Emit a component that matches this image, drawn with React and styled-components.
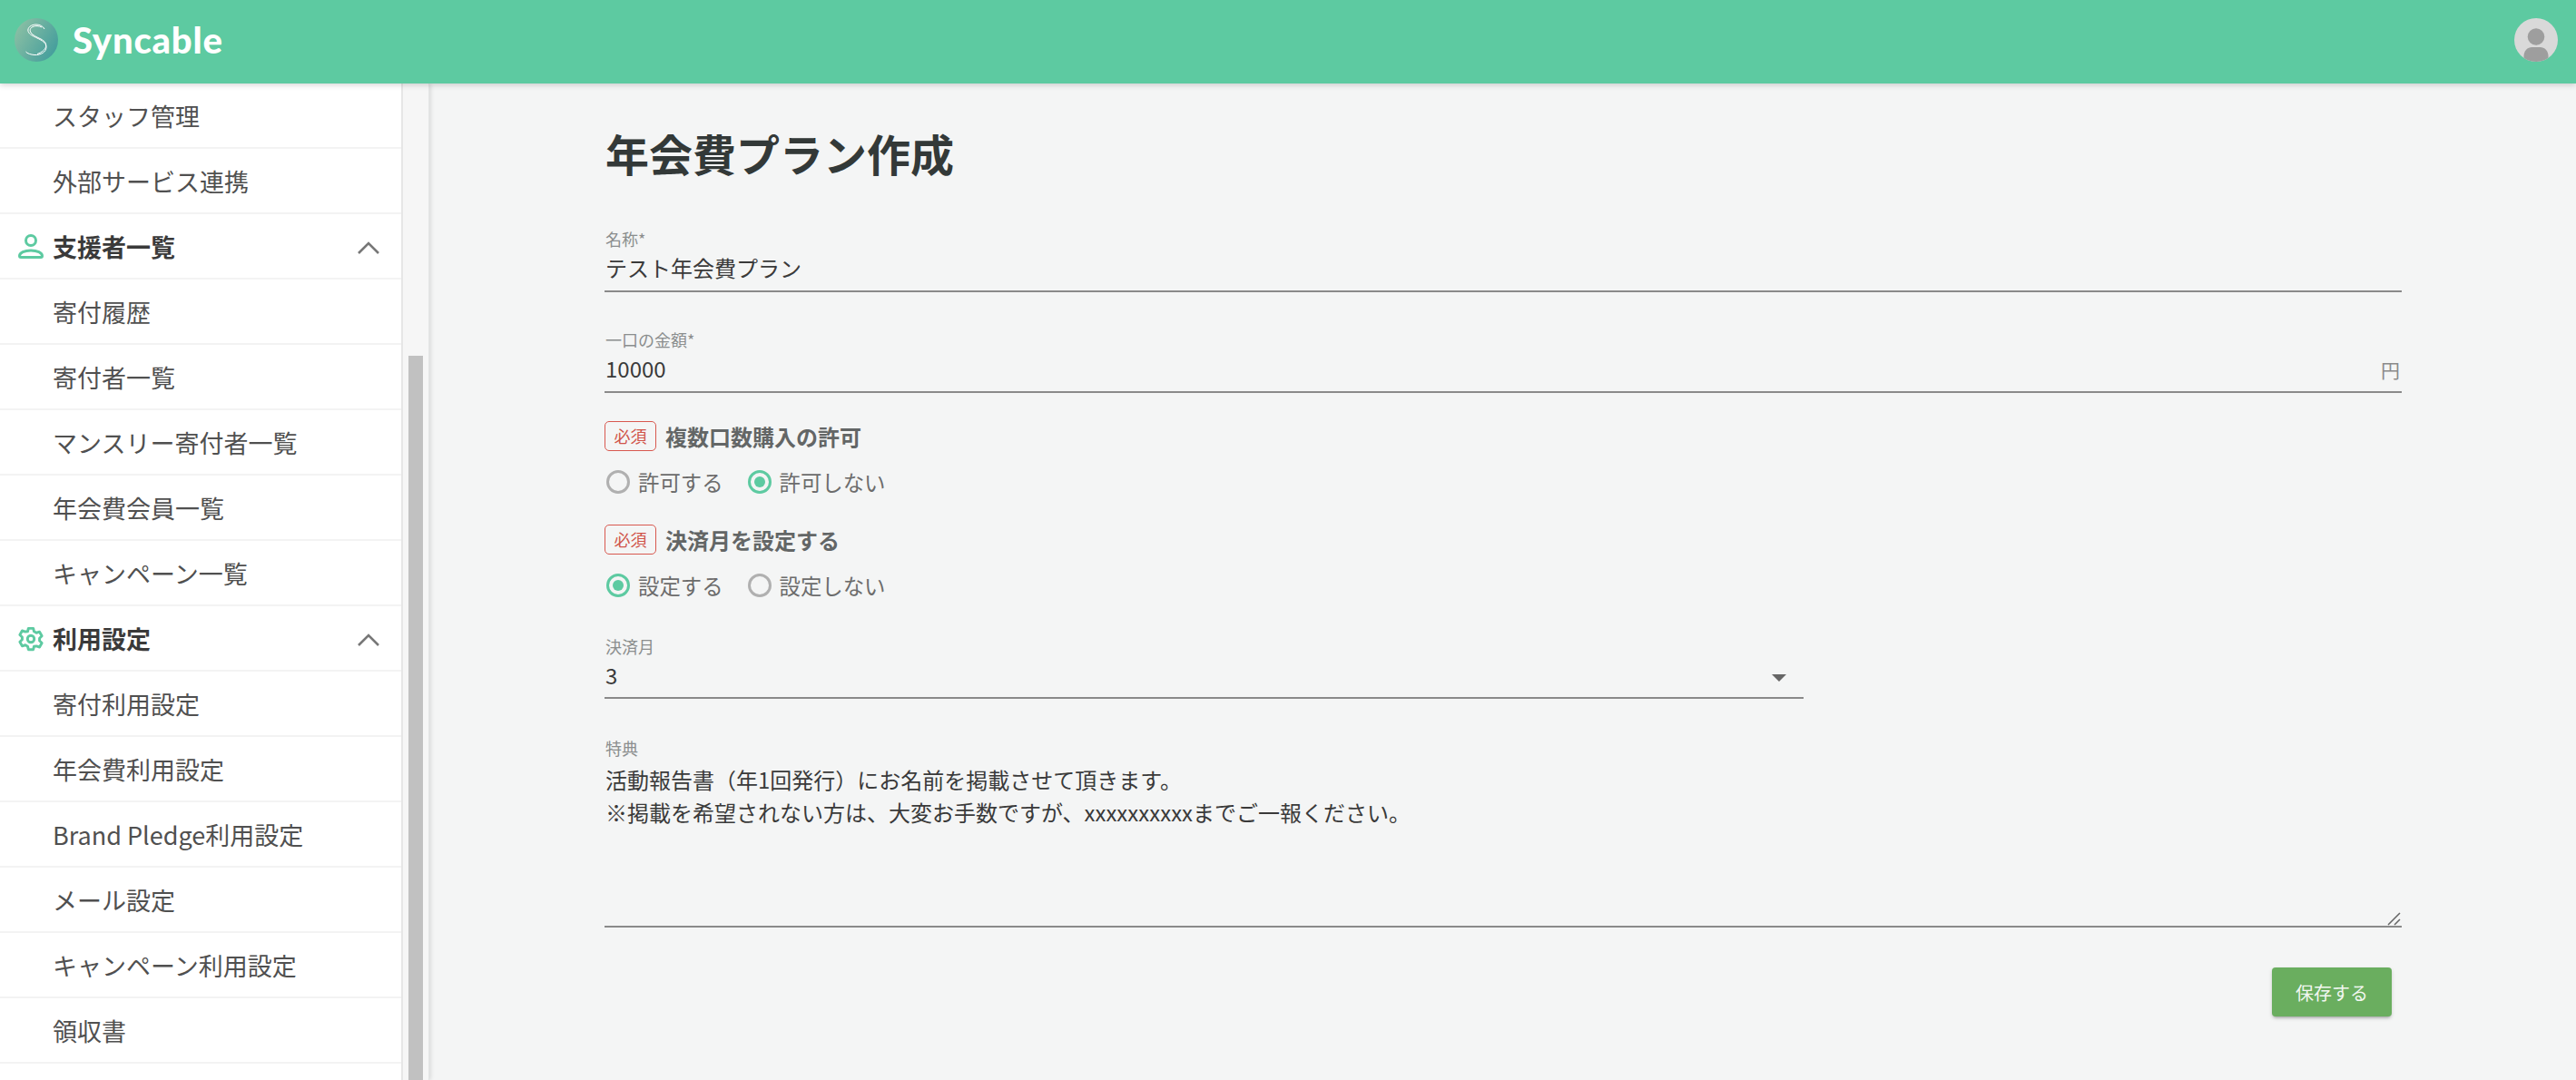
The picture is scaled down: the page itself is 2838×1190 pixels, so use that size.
import React from "react";
import styled, { createGlobalStyle } from "styled-components";

const Global = createGlobalStyle`
  html, body { margin: 0; padding: 0; height: 100%; overflow: hidden; }
  body { font-family: "Noto Sans CJK JP", "Noto Sans", sans-serif; background: #f4f5f5; }
  #root { height: 100%; }
  * { box-sizing: border-box; }
`;

const Page = styled.div`
  height: 100vh;
  display: flex;
  flex-direction: column;
  overflow: hidden;
`;
const Header = styled.header`
  flex: 0 0 92px;
  height: 92px;
  background: #5dcaa1;
  display: flex;
  align-items: center;
  justify-content: space-between;
  padding: 0 20px 4px 16px;
  box-shadow: 0 2px 6px rgba(0, 0, 0, 0.16);
  position: relative;
  z-index: 2;
`;
const Brand = styled.div`
  display: flex;
  align-items: center;
  gap: 16px;
`;
const BrandName = styled.span`
  font-family: "Lato", "Inter", sans-serif;
  font-weight: 900;
  font-size: 40px;
  line-height: 48px;
  color: #fff;
  letter-spacing: 0.8px;
`;
const Body = styled.div`
  flex: 1;
  display: flex;
  min-height: 0;
`;
const Sidebar = styled.aside`
  flex: 0 0 473px;
  display: flex;
  overflow: hidden;
  border-right: 1px solid #e4e6e6;
  box-shadow: 2px 0 4px rgba(0, 0, 0, 0.1);
`;
const Nav = styled.nav`
  flex: 0 0 444px;
  background: #fff;
  border-right: 2px solid #e6e6e6;
  overflow: hidden;
`;
const Row = styled.div`
  height: 72px;
  display: flex;
  align-items: center;
  padding: 0 24px 0 58px;
  border-bottom: 2px solid #f3f3f3;
  font-size: 27px;
  font-weight: ${(p) => (p.$section ? 700 : 400)};
  color: ${(p) => (p.$section ? "#3a3a3a" : "#505050")};
  white-space: nowrap;
  position: relative;
`;
const RowIcon = styled.span`
  position: absolute;
  left: 20px;
  top: 22px;
  width: 28px;
  height: 28px;
  display: flex;
`;
const Chevron = styled.span`
  margin-left: auto;
  display: flex;
  padding-top: 4px;
`;
const ScrollTrack = styled.div`
  flex: 1;
  background: #f6f6f6;
  padding: 300px 6px 0 6px;
`;
const ScrollThumb = styled.div`
  height: 100%;
  background: #c1c1c1;
`;
const Main = styled.main`
  flex: 1;
  padding: 46px 192px 0 193px;
  min-width: 0;
`;
const Title = styled.h1`
  margin: 0 0 53px;
  padding-left: 1px;
  font-size: 48px;
  line-height: 60px;
  font-weight: 700;
  color: #333938;
`;
const Field = styled.div`
  width: ${(p) => p.$width || "100%"};
  margin-bottom: ${(p) => p.$after ?? 40}px;
  position: relative;
`;
const FieldLabel = styled.div`
  font-size: 18px;
  line-height: 24px;
  color: #8b8e8e;
  padding-left: 1px;
`;
const FieldValue = styled.div`
  height: ${(p) => p.$height || 45}px;
  border-bottom: 2px solid #8a8a8a;
  font-size: 24px;
  line-height: 40px;
  color: #3a3a3a;
  padding-left: 1px;
  display: flex;
  justify-content: space-between;
  box-sizing: content-box;
`;
const Unit = styled.span`
  font-size: 21px;
  line-height: 42px;
  color: #8a8a8a;
  padding-right: 2px;
`;
const Caret = styled.span`
  width: 0;
  height: 0;
  border-left: 8px solid transparent;
  border-right: 8px solid transparent;
  border-top: 8px solid #666;
  margin: 19px 19px 0 0;
`;
const MultiValue = styled.div`
  height: 186px;
  border-bottom: 2px solid #8a8a8a;
  padding: 5px 0 0 1px;
  font-size: 24px;
  line-height: 36px;
  color: #3a3a3a;
  white-space: pre-line;
`;
const Grip = styled.svg`
  position: absolute;
  right: 1px;
  bottom: 2px;
`;
const Group = styled.div`
  margin-bottom: ${(p) => p.$after}px;
`;
const GroupHead = styled.div`
  display: flex;
  align-items: center;
  height: 32px;
  gap: 10px;
`;
const Required = styled.span`
  width: 57px;
  height: 33px;
  border: 1.5px solid #d8584f;
  border-radius: 5px;
  color: #d0544a;
  font-size: 18px;
  line-height: 30px;
  text-align: center;
`;
const GroupTitle = styled.span`
  font-size: 24px;
  font-weight: 700;
  color: #636666;
`;
const RadioRow = styled.div`
  display: flex;
  gap: 27px;
  height: 36px;
  margin: 17px 0 0 2px;
  align-items: center;
`;
const RadioItem = styled.label`
  display: flex;
  align-items: center;
  gap: 9px;
  font-size: 23.4px;
  color: #6c6c6c;
`;
const RadioDot = styled.span`
  width: 26px;
  height: 26px;
  border-radius: 50%;
  border: 3px solid ${(p) => (p.$on ? "#5dcaa1" : "#b0b0b0")};
  display: flex;
  align-items: center;
  justify-content: center;
  &::after {
    content: "";
    width: 12px;
    height: 12px;
    border-radius: 50%;
    background: ${(p) => (p.$on ? "#5dcaa1" : "transparent")};
  }
`;
const Actions = styled.div`
  display: flex;
  justify-content: flex-end;
  padding-right: 11px;
`;
const SaveButton = styled.button`
  width: 132px;
  height: 54px;
  border: 0;
  border-radius: 4px;
  background: #6aae5f;
  color: #f2f7f1;
  font-family: inherit;
  font-size: 20px;
  box-shadow: 0 3px 3px -2px rgba(0, 0, 0, 0.25), 0 2px 4px rgba(0, 0, 0, 0.16);
`;

const ChevronUp = () => (
  <svg width="24" height="14" viewBox="0 0 24 14" fill="none" stroke="#777" strokeWidth="2.6">
    <path d="M1 13 12 2l11 11" />
  </svg>
);
const PersonIcon = () => (
  <svg width="28" height="28" viewBox="0 0 28 28" fill="none" stroke="#5dcaa1" strokeWidth="3">
    <circle cx="14" cy="7" r="5.500" />
    <path d="M1.500 24c0-3.600 5.500-6 12.500-6s12.500 2.400 12.500 6c0 .8-.5 1.500-1.500 1.500H3c-1 0-1.500-.7-1.500-1.500z" />
  </svg>
);
const GearIcon = () => (
  <svg width="28" height="28" viewBox="0 0 24 24" fill="none" stroke="#5dcaa1" strokeWidth="2.500" strokeLinejoin="round">
    <path d="M9.700 2h4.600l.7 3 2.200 1.200 3-.9 2.200 3.900-2.200 2.100v2.400l2.200 2.100-2.200 3.900-3-.9L15 19l-.7 3H9.700L9 19l-2.200-1.200-3 .9-2.200-3.900 2.200-2.100v-2.400L1.600 8.200l2.200-3.900 3 .9L9 5z" />
    <circle cx="12" cy="12" r="3.200" />
  </svg>
);
const Logo = () => (
  <svg width="48" height="48" viewBox="0 0 48 48" fill="none">
    <defs>
      <linearGradient id="logoFill" x1="0" y1="0.2" x2="1" y2="0.8">
        <stop offset="0" stopColor="#8cc0a4" />
        <stop offset="1" stopColor="#419c9c" />
      </linearGradient>
    </defs>
    <circle cx="24" cy="24" r="24" fill="url(#logoFill)" />
    <g stroke="#fff" strokeWidth="1">
      <path d="M33 12c-1.500-3-5-5-9-5-6 0-10 3.500-9 7.500 1 3.500 6 5.500 10 7.500 5 2.500 10 5 10 10 0 5-6 9-13 8.500-4-.3-8-1.500-9.500-3.500" />
      <path d="M30 10c-3-1.500-7-2-10-.5-3 1.500-3.500 4-2 6.500 2 3 7 5 11 7 4 2 6.500 4.500 5.500 8.500-.8 3-4 6-9.500 8" />
    </g>
  </svg>
);
const Avatar = () => (
  <svg width="48" height="48" viewBox="0 0 48 48">
    <clipPath id="avatarClip"><circle cx="24" cy="24" r="24" /></clipPath>
    <g clipPath="url(#avatarClip)">
      <rect width="48" height="48" fill="#d9d9d9" />
      <circle cx="24" cy="20.500" r="9.300" fill="#9e9e9e" />
      <path d="M10.500 48V42c0-6 4-10 9-10h9c5 0 9 4 9 10v6z" fill="#9e9e9e" />
    </g>
  </svg>
);

const navItems = [
  { label: "スタッフ管理" },
  { label: "外部サービス連携" },
  { label: "支援者一覧", icon: <PersonIcon /> },
  { label: "寄付履歴" },
  { label: "寄付者一覧" },
  { label: "マンスリー寄付者一覧" },
  { label: "年会費会員一覧" },
  { label: "キャンペーン一覧" },
  { label: "利用設定", icon: <GearIcon /> },
  { label: "寄付利用設定" },
  { label: "年会費利用設定" },
  { label: "Brand Pledge利用設定" },
  { label: "メール設定" },
  { label: "キャンペーン利用設定" },
  { label: "領収書" },
  { label: "" },
];

const RadioGroup = ({ title, options, after }) => (
  <Group $after={after}>
    <GroupHead>
      <Required>必須</Required>
      <GroupTitle>{title}</GroupTitle>
    </GroupHead>
    <RadioRow>
      {options.map((o) => (
        <RadioItem key={o.label}>
          <RadioDot $on={o.on} />
          {o.label}
        </RadioItem>
      ))}
    </RadioRow>
  </Group>
);

export default function App() {
  return (
    <Page>
      <Global />
      <Header>
        <Brand>
          <Logo />
          <BrandName>Syncable</BrandName>
        </Brand>
        <Avatar />
      </Header>
      <Body>
        <Sidebar>
          <Nav>
            {navItems.map((item, i) => (
              <Row key={i} $section={!!item.icon}>
                {item.icon && <RowIcon>{item.icon}</RowIcon>}
                {item.label}
                {item.icon && (
                  <Chevron>
                    <ChevronUp />
                  </Chevron>
                )}
              </Row>
            ))}
          </Nav>
          <ScrollTrack>
            <ScrollThumb />
          </ScrollTrack>
        </Sidebar>
        <Main>
          <Title>年会費プラン作成</Title>
          <Field>
            <FieldLabel>名称*</FieldLabel>
            <FieldValue>テスト年会費プラン</FieldValue>
          </Field>
          <Field $after={31}>
            <FieldLabel>一口の金額*</FieldLabel>
            <FieldValue>
              10000
              <Unit>円</Unit>
            </FieldValue>
          </Field>
          <RadioGroup
            title="複数口数購入の許可"
            after={29}
            options={[{ label: "許可する" }, { label: "許可しない", on: true }]}
          />
          <RadioGroup
            title="決済月を設定する"
            after={37}
            options={[{ label: "設定する", on: true }, { label: "設定しない" }]}
          />
          <Field $width="1321px" $after={42}>
            <FieldLabel>決済月</FieldLabel>
            <FieldValue $height={44}>
              3
              <Caret />
            </FieldValue>
          </Field>
          <Field $after={44}>
            <FieldLabel>特典</FieldLabel>
            <MultiValue>
              {"活動報告書（年1回発行）にお名前を掲載させて頂きます。\n※掲載を希望されない方は、大変お手数ですが、xxxxxxxxxxまでご一報ください。"}
            </MultiValue>
            <Grip width="15" height="15" viewBox="0 0 15 15" stroke="#666" strokeWidth="1.500">
              <path d="M1 14 14 1M8 14l6-6" />
            </Grip>
          </Field>
          <Actions>
            <SaveButton>保存する</SaveButton>
          </Actions>
        </Main>
      </Body>
    </Page>
  );
}
